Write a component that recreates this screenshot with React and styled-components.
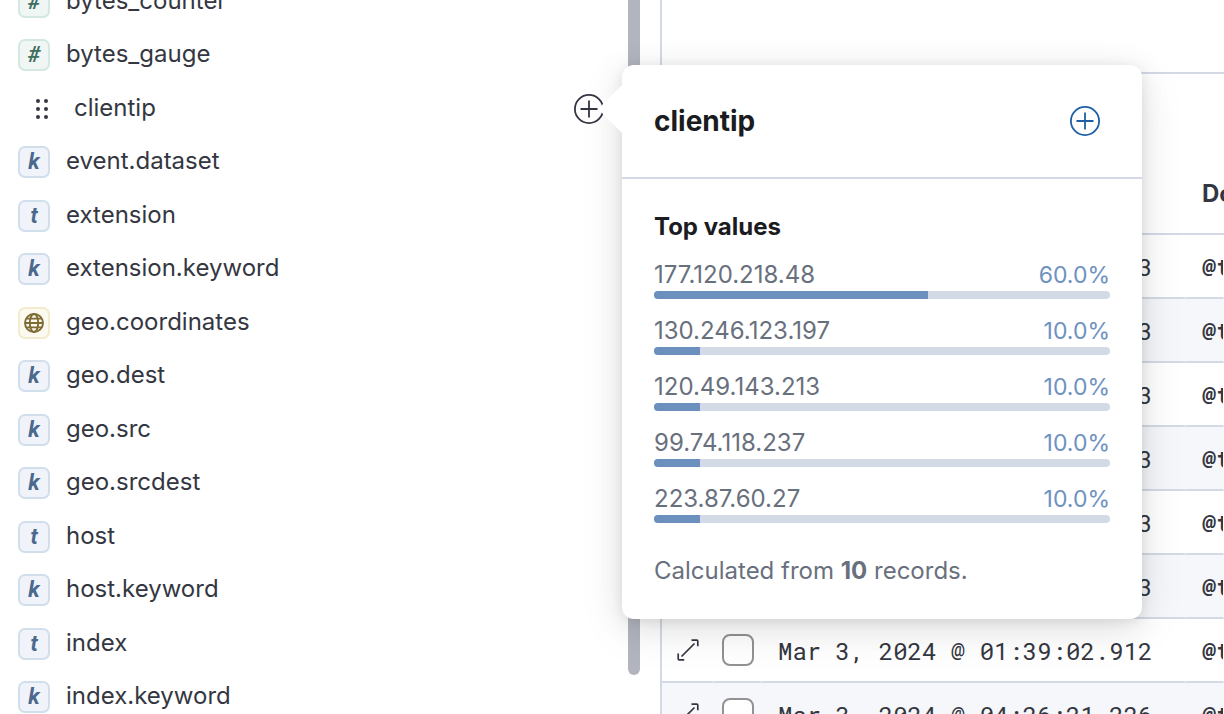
import React from 'react';
import styled, { createGlobalStyle } from 'styled-components';

const GlobalStyle = createGlobalStyle`
	* {
		box-sizing: border-box;
	}

	body {
		margin: 0;
		background-color: #fff;
		color: #343741;
		font-family: Inter, "Liberation Sans", sans-serif;
		font-size: 24px;
		line-height: 32px;
	}

	button {
		padding: 0;
		border: none;
		background: none;
		color: inherit;
		font: inherit;
		cursor: pointer;
	}
`;

const Page = styled.div`
	display: flex;
	height: 100vh;
	overflow: hidden;
`;

const Sidebar = styled.aside`
	flex: 0 0 660px;
	display: flex;
`;

const FieldList = styled.ul`
	flex: 1;
	margin: -25px 0 0;
	padding: 0 23px 0 18px;
	list-style: none;
`;

const FieldItem = styled.li`
	display: flex;
	align-items: center;
	gap: 16px;
	height: 53px;

	&:nth-child(even) {
		height: 54px;
	}
`;

const FieldName = styled.button`
	flex: 1;
	padding-bottom: 2px;
	text-align: left;
`;

const tokenColors = {
	number: { text: '#3f6f60', fill: '#f0f6f4', line: '#d2e8e0' },
	string: { text: '#4a698d', fill: '#f0f3f9', line: '#d1deec' },
	geo: { text: '#7e6c34', fill: '#fbf9f0', line: '#f2ebcd' },
};

const Token = styled.span`
	display: flex;
	align-items: center;
	justify-content: center;
	width: 32px;
	height: 32px;
	border: 2px solid ${({ $kind }) => tokenColors[$kind].line};
	border-radius: 7px;
	background-color: ${({ $kind }) => tokenColors[$kind].fill};
	color: ${({ $kind }) => tokenColors[$kind].text};
	font-family: Roboto, "Liberation Sans", sans-serif;
	font-size: 22px;
	font-style: italic;
	font-weight: 700;
	line-height: 28px;
`;

const DragHandle = styled.span`
	display: flex;
	justify-content: flex-end;
	width: 40px;
	padding-right: 8px;
`;

const AddButton = styled.button`
	display: flex;
	color: ${({ $primary }) => ($primary ? '#1d5fa5' : '#343741')};
`;

const PopoverAnchor = styled.div`
	position: relative;
	display: flex;
`;

const ScrollTrack = styled.div`
	width: 32px;
`;

const ScrollThumb = styled.div`
	width: 12px;
	height: 675px;
	border-radius: 0 0 6px 6px;
	background-color: #b2b5be;
`;

const Main = styled.main`
	flex: 1;
	min-width: 0;
	overflow: hidden;
	border-left: 2px solid #d3dae6;
`;

const ChartArea = styled.div`
	height: 74px;
	border-bottom: 2px solid #d3dae6;
`;

const Toolbar = styled.div`
	height: 80px;
`;

const Grid = styled.table`
	width: 100%;
	table-layout: fixed;
	border-collapse: separate;
	border-spacing: 0;
	font-family: "Roboto Mono", "Liberation Mono", monospace;
	white-space: nowrap;
`;

const HeadCell = styled.th`
	width: ${({ $width }) => $width};
	height: 81px;
	padding: 0 16px;
	overflow: hidden;
	border-bottom: 2px solid #d3dae6;
	font-family: Inter, "Liberation Sans", sans-serif;
	text-align: left;
`;

const Row = styled.tr`
	background-color: ${({ $striped }) => ($striped ? '#f5f7fa' : '#fff')};
`;

const Cell = styled.td`
	height: 64px;
	padding: 0 0 0 ${({ $inset }) => $inset || '16px'};
	overflow: hidden;
	border-right: 1px solid transparent;
	border-bottom: 2px solid #d3dae6;
`;

const TextCell = styled(Cell)`
	padding-top: 2px;
`;

const ExpandButton = styled.button`
	display: flex;
`;

const Checkbox = styled.input`
	appearance: none;
	display: block;
	width: 32px;
	height: 32px;
	margin: 0;
	border: 2px solid #929292;
	border-radius: 8px;
	background-color: #fff;
`;

const Popover = styled.section`
	position: absolute;
	top: -28px;
	left: 49px;
	z-index: 10;
	width: 520px;
	border-radius: 12px;
	background-color: #fff;
	box-shadow: 0 2px 12px rgba(0, 0, 0, 0.08), 0 6px 32px rgba(0, 0, 0, 0.08), 0 12px 48px rgba(0, 0, 0, 0.08);

	&::before {
		content: "";
		position: absolute;
		top: 20px;
		left: -24px;
		border: 24px solid transparent;
		border-left: none;
		border-right-color: #fff;
	}
`;

const PopoverHeader = styled.header`
	display: flex;
	align-items: center;
	justify-content: space-between;
	padding: 39px 41px 39px 32px;
	border-bottom: 2px solid #d3dae6;
`;

const PopoverTitle = styled.h2`
	margin: 0;
	color: #1a1c21;
	font-size: 28px;
	font-weight: 700;
	line-height: 34px;
`;

const PopoverBody = styled.div`
	padding: 32px;
`;

const SectionTitle = styled.h3`
	margin: 0 0 16px;
	color: #1a1c21;
	font-size: 24px;
	font-weight: 700;
	line-height: 32px;
`;

const ValueList = styled.ul`
	display: grid;
	gap: 16px;
	margin: 0;
	padding: 0;
	list-style: none;
`;

const ValueLabel = styled.div`
	display: flex;
	justify-content: space-between;
	color: #69707d;
`;

const Percent = styled.span`
	color: #6d92bf;
	font-size: 23px;
`;

const Track = styled.div`
	height: 8px;
	overflow: hidden;
	border-radius: 4px;
	background-color: #d3d9e5;
`;

const Fill = styled.div`
	height: 100%;
	background-color: #6b90bd;
`;

const Summary = styled.p`
	margin: 32px 0 0;
	color: #69707d;
`;

const fields = [
	{ name: 'bytes_counter', kind: 'number', glyph: '#' },
	{ name: 'bytes_gauge', kind: 'number', glyph: '#' },
	{ name: 'clientip', active: true },
	{ name: 'event.dataset', kind: 'string', glyph: 'k' },
	{ name: 'extension', kind: 'string', glyph: 't' },
	{ name: 'extension.keyword', kind: 'string', glyph: 'k' },
	{ name: 'geo.coordinates', kind: 'geo' },
	{ name: 'geo.dest', kind: 'string', glyph: 'k' },
	{ name: 'geo.src', kind: 'string', glyph: 'k' },
	{ name: 'geo.srcdest', kind: 'string', glyph: 'k' },
	{ name: 'host', kind: 'string', glyph: 't' },
	{ name: 'host.keyword', kind: 'string', glyph: 'k' },
	{ name: 'index', kind: 'string', glyph: 't' },
	{ name: 'index.keyword', kind: 'string', glyph: 'k' },
];

const topValues = [
	{ value: '177.120.218.48', percent: 60 },
	{ value: '130.246.123.197', percent: 10 },
	{ value: '120.49.143.213', percent: 10 },
	{ value: '99.74.118.237', percent: 10 },
	{ value: '223.87.60.27', percent: 10 },
];

const records = [
	'Mar 3, 2024 @ 01:39:02.903',
	'Mar 3, 2024 @ 01:39:02.903',
	'Mar 3, 2024 @ 01:39:02.903',
	'Mar 3, 2024 @ 01:39:02.903',
	'Mar 3, 2024 @ 01:39:02.903',
	'Mar 3, 2024 @ 01:39:02.903',
	'Mar 3, 2024 @ 01:39:02.912',
	'Mar 3, 2024 @ 04:26:21.226',
];

const PlusCircleIcon = () => (
	<svg width="32" height="32" viewBox="0 0 32 32" fill="none" stroke="currentColor" strokeWidth="1.8">
		<circle cx="16" cy="16" r="14.1" />
		<path d="M16 7.5v17M7.5 16h17" />
	</svg>
);

const GripIcon = () => (
	<svg width="14" height="22" viewBox="0 0 14 22" fill="currentColor">
		{[3, 11, 19].map((y) => (
			<React.Fragment key={y}>
				<circle cx="2" cy={y} r="2" />
				<circle cx="10" cy={y} r="2" />
			</React.Fragment>
		))}
	</svg>
);

const GlobeIcon = () => (
	<svg width="20" height="20" viewBox="0 0 20 20" fill="none" stroke="currentColor" strokeWidth="1.9">
		<circle cx="10" cy="10" r="9" />
		<ellipse cx="10" cy="10" rx="4.2" ry="9" />
		<path d="M1 10h18M2.4 5.6h15.2M2.4 14.4h15.2" />
	</svg>
);

const ExpandIcon = () => (
	<svg width="22" height="22" viewBox="0 0 22 22" fill="none" stroke="#343741" strokeWidth="1.7">
		<path d="M4.5 17.5l13-13M14.5 1.2h5.3q1 0 1 1v5M1.2 14.5v5.3q0 1 1 1h5" />
	</svg>
);

function FieldStats() {
	return (
		<Popover role="dialog" aria-label="clientip">
			<PopoverHeader>
				<PopoverTitle>clientip</PopoverTitle>
				<AddButton type="button" $primary aria-label="Add clientip as column">
					<PlusCircleIcon />
				</AddButton>
			</PopoverHeader>
			<PopoverBody>
				<SectionTitle>Top values</SectionTitle>
				<ValueList>
					{topValues.map(({ value, percent }) => (
						<li key={value}>
							<ValueLabel>
								<span>{value}</span>
								<Percent>{percent.toFixed(1)}%</Percent>
							</ValueLabel>
							<Track>
								<Fill style={{ width: `${percent}%` }} />
							</Track>
						</li>
					))}
				</ValueList>
				<Summary>
					Calculated from <strong>10</strong> records.
				</Summary>
			</PopoverBody>
		</Popover>
	);
}

function Field({ field }) {
	if (field.active) {
		return (
			<FieldItem>
				<DragHandle>
					<GripIcon />
				</DragHandle>
				<FieldName type="button">{field.name}</FieldName>
				<PopoverAnchor>
					<AddButton type="button" aria-label="Add field">
						<PlusCircleIcon />
					</AddButton>
					<FieldStats />
				</PopoverAnchor>
			</FieldItem>
		);
	}

	return (
		<FieldItem>
			<Token $kind={field.kind}>{field.glyph || <GlobeIcon />}</Token>
			<FieldName type="button">{field.name}</FieldName>
		</FieldItem>
	);
}

function App() {
	return (
		<Page>
			<GlobalStyle />
			<Sidebar>
				<FieldList>
					{fields.map((field) => (
						<Field key={field.name} field={field} />
					))}
				</FieldList>
				<ScrollTrack>
					<ScrollThumb />
				</ScrollTrack>
			</Sidebar>
			<Main>
				<ChartArea />
				<Toolbar />
				<Grid>
					<thead>
						<tr>
							<HeadCell $width="52px" />
							<HeadCell $width="48px" />
							<HeadCell $width="424px" />
							<HeadCell>Document</HeadCell>
						</tr>
					</thead>
					<tbody>
						{records.map((time, index) => (
							<Row key={index} $striped={index % 2 === 1}>
								<Cell $inset="15px">
									<ExpandButton type="button" aria-label="Expand document">
										<ExpandIcon />
									</ExpandButton>
								</Cell>
								<Cell $inset="8px">
									<Checkbox type="checkbox" aria-label="Select document" />
								</Cell>
								<TextCell>{time}</TextCell>
								<TextCell>
									<strong>@timestamp</strong>
								</TextCell>
							</Row>
						))}
					</tbody>
				</Grid>
			</Main>
		</Page>
	);
}

export default App;
